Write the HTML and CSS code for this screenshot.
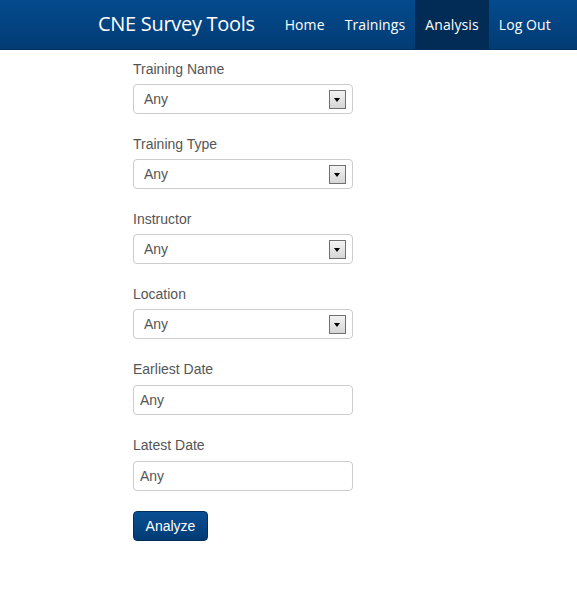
FILE: index.html
```html
<!DOCTYPE html>
<html>
<head>
<meta charset="utf-8">
<link rel="stylesheet" href="styles.css">
</head>
<body>
<header class="navbar">
  <div class="brand">CNE Survey Tools</div>
  <nav class="nav">
    <a class="nav-link">Home</a>
    <a class="nav-link">Trainings</a>
    <a class="nav-link active">Analysis</a>
    <a class="nav-link">Log Out</a>
  </nav>
</header>
<main class="form">
  <div class="group">
    <label class="label">Training Name</label>
    <div class="select"><span>Any</span><span class="arrow"></span></div>
  </div>
  <div class="group">
    <label class="label">Training Type</label>
    <div class="select"><span>Any</span><span class="arrow"></span></div>
  </div>
  <div class="group">
    <label class="label">Instructor</label>
    <div class="select"><span>Any</span><span class="arrow"></span></div>
  </div>
  <div class="group">
    <label class="label">Location</label>
    <div class="select"><span>Any</span><span class="arrow"></span></div>
  </div>
  <div class="group tall">
    <label class="label">Earliest Date</label>
    <div class="input">Any</div>
  </div>
  <div class="group tall">
    <label class="label">Latest Date</label>
    <div class="input">Any</div>
  </div>
  <button class="btn">Analyze</button>
</main>
</body>
</html>
```

FILE: styles.css
```css
* { box-sizing: border-box; }
body {
  margin: 0;
  background: #fff;
  font-family: "Liberation Sans", Arial, sans-serif;
  font-size: 14px;
  color: #555;
}
.navbar {
  height: 50px;
  display: flex;
  align-items: stretch;
  padding-left: 98px;
  background: linear-gradient(to bottom, #044a8d 0%, #023c74 100%);
  border-bottom: 1px solid #022f5c;
}
.brand {
  display: flex;
  align-items: center;
  font-family: "Open Sans", "DejaVu Sans", sans-serif;
  font-size: 20px;
  letter-spacing: -0.3px;
  color: #fff;
  padding-bottom: 3px;
  margin-right: 20px;
}
.nav {
  display: flex;
}
.nav-link {
  display: flex;
  align-items: center;
  padding: 0 10px 1px;
  font-family: "Open Sans", "DejaVu Sans", sans-serif;
  font-size: 14px;
  letter-spacing: 0.1px;
  color: #fff;
}
.nav-link.active {
  background: #022b55;
}
.form {
  padding: 9px 0 0 133px;
  display: flex;
  flex-direction: column;
  align-items: flex-start;
}
.group {
  display: flex;
  flex-direction: column;
  margin-bottom: 20px;
}
.label {
  height: 20px;
  line-height: 20px;
  margin-bottom: 5px;
}
.group.tall .label {
  margin-bottom: 6px;
}
.select, .input {
  width: 220px;
  height: 30px;
  border: 1px solid #ccc;
  border-radius: 4px;
  display: flex;
  align-items: center;
  color: #555;
}
.select {
  padding-left: 10px;
  justify-content: space-between;
  padding-right: 6px;
}
.input {
  padding-left: 6px;
}
.arrow {
  width: 17px;
  height: 19px;
  border: 1px solid #707070;
  background: linear-gradient(to bottom, #f2f2f2, #d6d6d6);
  position: relative;
}
.arrow::after {
  content: "";
  position: absolute;
  left: 4px;
  top: 7px;
  border-left: 3.5px solid transparent;
  border-right: 3.5px solid transparent;
  border-top: 4px solid #000;
}
.btn {
  width: 75px;
  height: 30px;
  border: 1px solid #022e5c;
  border-radius: 4px;
  background: linear-gradient(to bottom, #0a4f93, #023b74);
  color: #fff;
  font-family: "Liberation Sans", Arial, sans-serif;
  font-size: 14px;
  padding: 0;
}
```
